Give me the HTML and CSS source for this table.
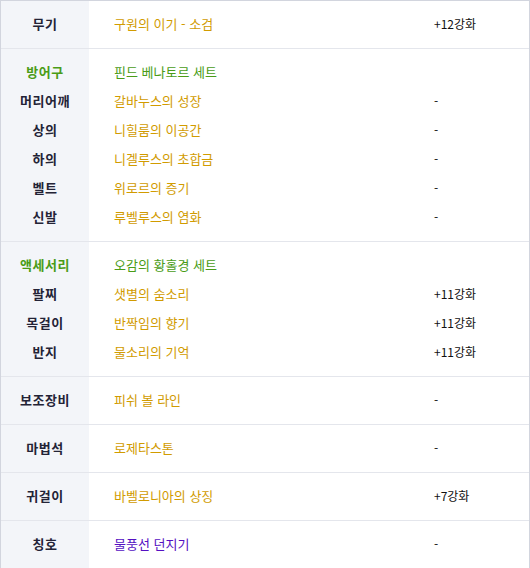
FILE: index.html
```html
<!DOCTYPE html>
<html lang="ko">
<head>
<meta charset="utf-8">
<link rel="stylesheet" href="styles.css">
</head>
<body>
<div class="equip">
  <div class="group">
    <div class="row"><span class="label">무기</span><span class="name gold">구원의 이기 - 소검</span><span class="val">+12강화</span></div>
  </div>
  <div class="group">
    <div class="row"><span class="label green">방어구</span><span class="name green">핀드 베나토르 세트</span><span class="val"></span></div>
    <div class="row"><span class="label">머리어깨</span><span class="name gold">갈바누스의 성장</span><span class="val">-</span></div>
    <div class="row"><span class="label">상의</span><span class="name gold">니힐룸의 이공간</span><span class="val">-</span></div>
    <div class="row"><span class="label">하의</span><span class="name gold">니겔루스의 초합금</span><span class="val">-</span></div>
    <div class="row"><span class="label">벨트</span><span class="name gold">위로르의 증기</span><span class="val">-</span></div>
    <div class="row"><span class="label">신발</span><span class="name gold">루벨루스의 염화</span><span class="val">-</span></div>
  </div>
  <div class="group">
    <div class="row"><span class="label green">액세서리</span><span class="name green">오감의 황홀경 세트</span><span class="val"></span></div>
    <div class="row"><span class="label">팔찌</span><span class="name gold">샛별의 숨소리</span><span class="val">+11강화</span></div>
    <div class="row"><span class="label">목걸이</span><span class="name gold">반짝임의 향기</span><span class="val">+11강화</span></div>
    <div class="row"><span class="label">반지</span><span class="name gold">물소리의 기억</span><span class="val">+11강화</span></div>
  </div>
  <div class="group">
    <div class="row"><span class="label">보조장비</span><span class="name gold">피쉬 볼 라인</span><span class="val">-</span></div>
  </div>
  <div class="group">
    <div class="row"><span class="label">마법석</span><span class="name gold">로제타스톤</span><span class="val">-</span></div>
  </div>
  <div class="group">
    <div class="row"><span class="label">귀걸이</span><span class="name gold">바벨로니아의 상징</span><span class="val">+7강화</span></div>
  </div>
  <div class="group last">
    <div class="row"><span class="label">칭호</span><span class="name purple">물풍선 던지기</span><span class="val">-</span></div>
  </div>
</div>
</body>
</html>
```

FILE: styles.css
```css
html, body {
  margin: 0;
  padding: 0;
  background: #fff;
}
body {
  font-family: "Noto Sans CJK KR", "Noto Sans", sans-serif;
  font-size: 13px;
}
.equip {
  width: 528px;
  border: 1px solid #d2d5de;
  border-bottom: none;
}
.group {
  padding: 9px 0;
  border-bottom: 1px solid #e4e6ec;
  background: linear-gradient(to right, #f3f5f9 88px, #ffffff 88px);
}
.group.last {
  border-bottom: none;
}
.row {
  display: grid;
  grid-template-columns: 88px 345px 1fr;
  height: 29px;
  line-height: 27px;
}
.label {
  text-align: center;
  font-weight: 700;
  color: #232336;
  font-size: 13px;
  letter-spacing: 0.5px;
}
.name {
  padding-left: 25px;
  font-size: 13px;
}
.val {
  color: #111;
  font-size: 12px;
}
.gold { color: #d19b00; }
.green { color: #4a9c17; }
.label.green { color: #4a9c17; }
.purple { color: #5510c2; }
```
